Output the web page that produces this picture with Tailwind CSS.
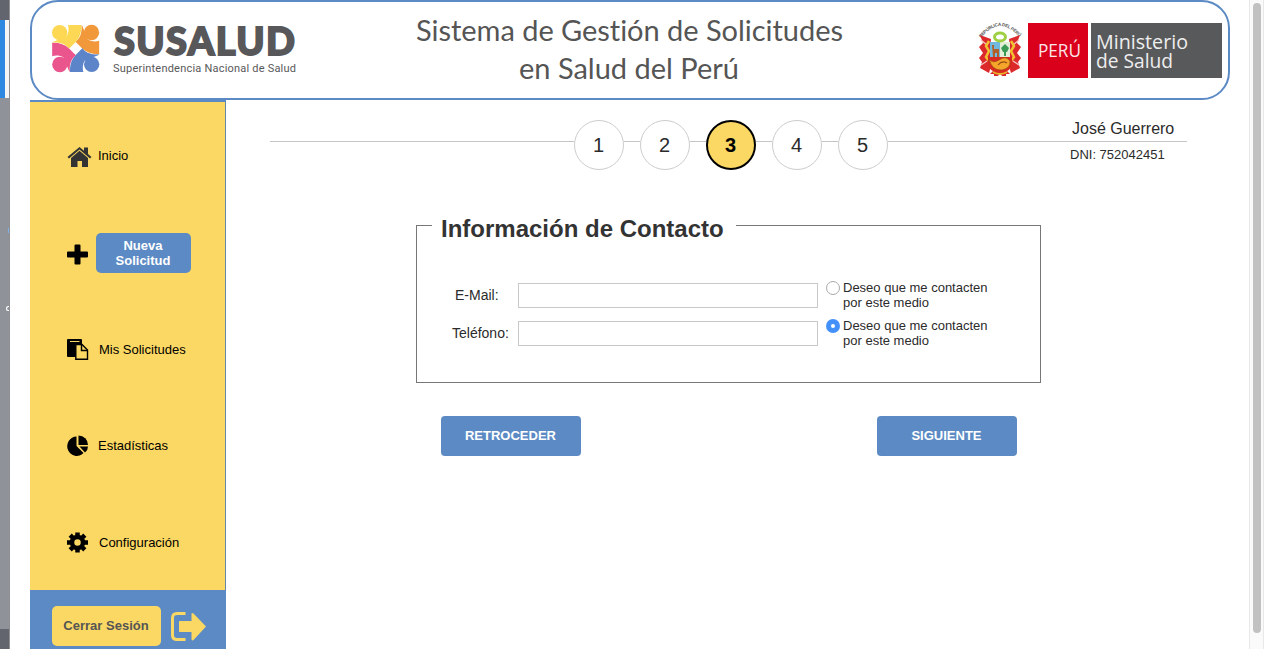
<!DOCTYPE html>
<html lang="es">
<head>
<meta charset="utf-8">
<title>SUSALUD</title>
<script src="https://cdn.jsdelivr.net/npm/@tailwindcss/browser@4"></script>
</head>
<body class="flex h-[649px] w-[1264px] overflow-hidden bg-white font-['Liberation_Sans',Arial,sans-serif] text-[13px] leading-[15px] text-black">

<!-- Edge of the window behind -->
<div class="flex w-[10px] shrink-0 flex-col border-r border-[#8f8f93] bg-[#8f9399]">
  <div class="h-[20px] bg-[#62656d]"></div>
  <div class="h-[78px] border-r-4 border-[#f4f4f4] bg-[#2e87e0]"></div>
  <div class="flex flex-1 flex-col items-end">
    <div class="mt-[130px] h-[5px] w-px bg-[#7fb0e6]"></div>
    <div class="mt-[73px] h-[5px] w-[3px] rounded-l-full border-y border-l border-white"></div>
  </div>
  <div class="h-[20px] bg-[#62656d]"></div>
</div>

<div class="ml-5 flex w-[1219px] shrink-0 flex-col">
  <header class="flex h-[100px] w-[1200px] shrink-0 rounded-[28px] border-2 border-[#5c8ac4] pl-[19px]">
    <svg class="mt-[22px] size-[50px] shrink-0" viewBox="15 18 150 150">
      <defs>
        <g id="petal"><circle cx="41" cy="44" r="23"/><path d="M66 21H106C107 42 101 58 90 71L69 92C60 80 45 72 20 74V72L50 60L62 55C68 45 69 33 66 21Z"/></g>
      </defs>
      <use href="#petal" fill="#f0983a" transform="rotate(90 89 91.500)"/>
      <use href="#petal" fill="#5c85c9" transform="rotate(180 89 91.500)"/>
      <use href="#petal" fill="#e9558c" transform="rotate(270 89 91.500)"/>
      <use href="#petal" fill="#fdd855"/>
    </svg>
    <svg class="mt-[8px] ml-[10px] h-[70px] w-[190px] shrink-0" viewBox="0 -10 190 70">
      <text x="3" y="34.500" font-family="Lato" font-weight="900" font-size="38" fill="#58585a" stroke="#58585a" stroke-width="1.800" textLength="181">SUSALUD</text>
      <text x="2" y="52" font-family="Roboto" font-size="11" fill="#58585a" textLength="183">Superintendencia Nacional de Salud</text>
    </svg>
    <svg class="ml-[111px] h-[90px] w-[440px] shrink-0 [font-variant-ligatures:none]" viewBox="0 0 440 90" font-family="Lato" font-size="29" fill="#555">
      <text x="4" y="38.500" textLength="427">Sistema de Gestión de Solicitudes</text>
      <text x="107" y="76.500" textLength="220">en Salud del Perú</text>
    </svg>
    <svg class="mt-[20px] ml-[126px] h-[58px] w-[44px] shrink-0" viewBox="0 0 44 58">
      <path id="arc" d="M3 16Q22-8 42 16" fill="none"/>
      <text font-family="Liberation Sans" font-weight="700" font-size="4.500" fill="#555"><textPath href="#arc" textLength="46">REPÚBLICA DEL PERÚ</textPath></text>
      <path d="M2 13L13 17L12 27L15 38L11 51L2 46L4 40L1 36L5 31L1 25L5 21ZM42 13L31 17L32 27L29 38L33 51L42 46L40 40L43 36L39 31L43 25L39 21Z" fill="#dc2a2c"/>
      <path d="M3 18l6 5M41 18l-6 5M3 43l6-4M41 43l-6-4" stroke="#f6c9c5" stroke-width="1.200"/>
      <path d="M11 19l-3 5 3 5-3 6 4 5M33 19l3 5-3 5 3 6-4 5" fill="none" stroke="#f2c230" stroke-width="2.500"/>
      <path d="M16 48L12 52H16V54H20L22 51L24 54H28V52H32L28 48Z" fill="#d8262b"/>
      <path d="M12 20H22V35H12Z" fill="#71b9de"/><path d="M22 20H32V35H22Z" fill="#e4efd8"/>
      <ellipse cx="22" cy="15" rx="5.500" ry="4" fill="#fff" stroke="#9fcf43" stroke-width="3"/>
      <path d="M14 23h2v4h5v8h-2v-4h-2v4h-2Z" fill="#b0602a"/>
      <path d="M27 22l4 4-2 4h-1v4h-2v-4h-1l-2-4Z" fill="#3b9a55"/>
      <path d="M10 35H34V41Q34 49 22 52Q10 49 10 41Z" fill="#d9281f"/>
      <path d="M11 37Q15 42 21 38Q28 33 32 39Q33 46 24 48Q14 49 11 37Z" fill="#f4a52a" stroke="#9a4a16" stroke-width=".7"/>
      <path d="M20 43Q24 38 29 41" fill="none" stroke="#9a4a16" stroke-width="1.200"/>
      <path d="M15 50Q22 54 29 50" fill="none" stroke="#e7b52c" stroke-width="2"/>
    </svg>
    <svg class="mt-[21px] ml-[6px] h-[55px] w-[194px] shrink-0" viewBox="0 0 194 55" font-family="Open Sans" fill="#fff">
      <path d="M0 0H60V55H0Z" fill="#da001c"/><path d="M63 0H194V55H63Z" fill="#58595b"/>
      <text x="10" y="34" font-size="19" textLength="43" lengthAdjust="spacingAndGlyphs" fill="#fbe6e8">PERÚ</text>
      <text x="68" y="26" font-size="20" textLength="92" lengthAdjust="spacingAndGlyphs" fill="#eee">Ministerio</text>
      <text x="68" y="45" font-size="20" textLength="77" lengthAdjust="spacingAndGlyphs" fill="#eee">de Salud</text>
    </svg>
  </header>

  <div class="flex flex-1">
    <aside class="flex w-[196px] shrink-0 flex-col border-t-2 border-r border-t-[#5c8ac4] border-r-[#6687a5] bg-[#fbd863]">
      <nav class="flex h-[488px] shrink-0 flex-col pl-[37px]">
        <a class="mt-[43px] flex h-6 items-center">
          <svg class="-mt-[2px] size-[25px]" viewBox="0 0 25 25" fill="#333"><path d="M.5 13L12.500 3L17 6.700V3.500H21V10L24.500 13L23 14.500L12.500 5.500L2 14.500Z"/><path d="M12.500 6.800L21 14V23H15V17H10.500V23H4V14Z"/></svg>
          <span class="ml-[6px] -translate-y-[2px]">Inicio</span>
        </a>
        <a class="mt-[64px] flex h-[40px] items-center">
          <svg class="mt-[2px] size-[21px]" viewBox="0 0 21 21"><path d="M8.500 .5h4q1 0 1 1v6h6.500q1 0 1 1v4q0 1-1 1h-6.500v6q0 1-1 1h-4q-1 0-1-1v-6h-6.500q-1 0-1-1v-4q0-1 1-1h6.500v-6q0-1 1-1Z"/></svg>
          <span class="ml-2 flex h-[40px] w-[95px] items-center justify-center rounded-[5px] bg-[#5c8ac4] pr-px text-center font-bold text-white">Nueva<br>Solicitud</span>
        </a>
        <a class="mt-[64px] flex h-[24px] items-center">
          <svg class="mt-[2px] size-[22px]" viewBox="0 0 22 22"><path d="M1 0H14Q15 0 15 1V5H9V18H1Q0 18 0 17V1Q0 0 1 0Z"/><path d="M3 2.500H12.500" stroke="#fbd863"/><path d="M8.800 5.500H15L20.500 11V20.300H8.800Z" fill="#fbd863" stroke="#000" stroke-width="1.400"/><path d="M14.500 5.500V11.500H20.500" fill="none" stroke="#000" stroke-width="1.400"/></svg>
          <span class="ml-[10px]">Mis Solicitudes</span>
        </a>
        <a class="mt-[72px] flex h-[24px] items-center">
          <svg class="mt-[2px] size-[22px]" viewBox="0 0 22 22"><path d="M9.500 1.500V11L16.500 18A9.500 9.700 0 1 1 9.500 1.500Z"/><path d="M11.500 .5A9.700 9.500 0 0 1 21 10H11.500Z"/><path d="M12.500 11.500H21Q21 15 18 17.500Z"/></svg>
          <span class="ml-[9px]">Estadísticas</span>
        </a>
        <a class="mt-[73px] flex h-[24px] items-center">
          <svg class="mt-[2px] size-[22px]" viewBox="0 0 22 22"><circle cx="10.500" cy="10.500" r="5.500" fill="none" stroke="#000" stroke-width="4.500"/><g stroke="#000" stroke-width="4.500"><path d="M10.500 .5V4.500M10.500 16.500V20.500M0 10.500H4M17 10.500H21M3.200 3.200L6 6M15 15L17.800 17.800M17.800 3.200L15 6M6 15L3.200 17.800"/></g></svg>
          <span class="ml-[10px]">Configuración</span>
        </a>
      </nav>
      <div class="-mr-px flex flex-1 items-start bg-[#5c8ac4] pt-4 pl-[22px]">
        <button class="h-[40px] w-[109px] rounded-[5px] bg-[#fbd863] pr-px pb-[2px] font-bold text-[#555]">Cerrar Sesión</button>
        <svg class="mt-[5px] ml-[9px] h-[31px] w-[38px]" viewBox="0 0 38 31"><path d="M15.500 2.500H7Q2.500 2.500 2.500 7V24Q2.500 28.500 7 28.500H15.500" fill="none" stroke="#fbd863" stroke-width="3"/><path d="M9.500 10H21.500V2.500Q22 1.500 23.500 2.500L36 15.500L23.500 29Q22 30 21.500 28.500V21H9.500Q9 21 9 20V11Q9 10 9.500 10Z" fill="#fbd863"/></svg>
      </div>
    </aside>

    <main class="relative w-[1023px] shrink-0 text-[#2b2b2b]">
      <div class="mt-[20px] ml-[44px] flex h-[50px] w-[917px] text-[20px] leading-[48px]">
        <div class="mt-[21px] h-px w-[304px] bg-[#c4c6c6]"></div>
        <div class="size-[50px] rounded-full border border-[#ccc] pr-px text-center">1</div>
        <div class="mt-[21px] h-px w-4 bg-[#c4c6c6]"></div>
        <div class="size-[50px] rounded-full border border-[#ccc] pr-px text-center">2</div>
        <div class="mt-[21px] h-px w-4 bg-[#c4c6c6]"></div>
        <div class="size-[50px] rounded-full border-2 border-black bg-[#fbd863] pr-px text-center leading-[46px] font-bold text-black">3</div>
        <div class="mt-[21px] h-px w-4 bg-[#c4c6c6]"></div>
        <div class="size-[50px] rounded-full border border-[#ccc] pr-px text-center">4</div>
        <div class="mt-[21px] h-px w-4 bg-[#c4c6c6]"></div>
        <div class="size-[50px] rounded-full border border-[#ccc] pr-px text-center">5</div>
        <div class="mt-[21px] h-px flex-1 bg-[#c4c6c6]"></div>
      </div>
      <div class="absolute top-[20px] left-[844px]">
        <p class="ml-[2px] text-[16px] leading-[18px]">José Guerrero</p>
        <p class="mt-[9px]">DNI: 752042451</p>
      </div>

      <section class="mt-[55px] ml-[190px] h-[158px] w-[625px] border border-[#777] pl-[15px]">
        <h1 class="-mt-[12px] w-[304px] bg-white pl-[9px] text-[24px] leading-[30px] font-bold whitespace-nowrap text-[#333]">Información de Contacto</h1>
        <div class="mt-[36px] flex h-[38px]">
          <label class="mt-[7px] w-[86px] pl-[23px] text-[14px] leading-[16px]">E-Mail:</label>
          <input class="mt-[3px] h-[25px] w-[300px] border border-[#c8c8c8]">
          <span class="mt-px ml-2 size-[14px] rounded-full border border-[#aaa]"></span>
          <span class="ml-[3px]">Deseo que me contacten<br>por este medio</span>
        </div>
        <div class="flex h-[38px]">
          <label class="mt-[7px] w-[86px] pl-[20px] text-[14px] leading-[16px]">Teléfono:</label>
          <input class="mt-[3px] h-[25px] w-[300px] border border-[#c8c8c8]">
          <span class="mt-px ml-2 flex size-[14px] items-center justify-center rounded-full bg-[#4490fb]"><span class="size-1 rounded-full bg-white"></span></span>
          <span class="ml-[3px]">Deseo que me contacten<br>por este medio</span>
        </div>
      </section>

      <div class="mt-[33px] ml-[215px] flex w-[576px] justify-between">
        <button class="h-[40px] w-[140px] rounded-[4px] bg-[#5c8ac4] pr-px pb-[2px] font-bold text-white">RETROCEDER</button>
        <button class="h-[40px] w-[140px] rounded-[4px] bg-[#5c8ac4] pr-px pb-[2px] font-bold text-white">SIGUIENTE</button>
      </div>
    </main>
  </div>
</div>

<div class="w-[15px] shrink-0 border-x border-[#e8e8e8] bg-[#fafafa] pl-[3px]">
  <div class="mt-[3px] h-[630px] w-2 rounded-full bg-[#c1c1c1]"></div>
</div>
</body>
</html>
